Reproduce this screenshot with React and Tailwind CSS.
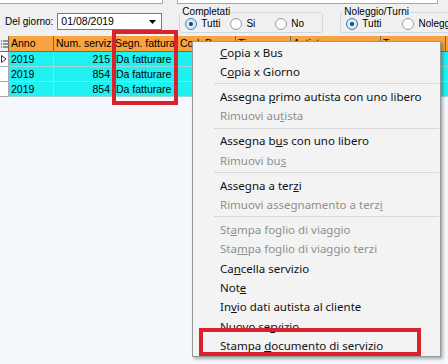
import React from "react";

const menuItems = [
  { label: "Copia x Bus", u: 0 },
  { label: "Copia x Giorno", u: 1 },
  { sep: true },
  { label: "Assegna primo autista con uno libero", u: 8 },
  { label: "Rimuovi autista", u: 10, disabled: true },
  { sep: true },
  { label: "Assegna bus con uno libero", u: 9 },
  { label: "Rimuovi bus", u: 10, disabled: true },
  { sep: true },
  { label: "Assegna a terzi", u: 13 },
  { label: "Rimuovi assegnamento a terzi", u: 27, disabled: true },
  { sep: true },
  { label: "Stampa foglio di viaggio", u: 2, disabled: true },
  { label: "Stampa foglio di viaggio terzi", u: 3, disabled: true },
  { label: "Cancella servizio", u: 2 },
  { label: "Note", u: 3 },
  { label: "Invio dati autista al cliente", u: 2 },
  { label: "Nuovo servizio", u: 8 },
  { label: "Stampa documento di servizio", u: 7 },
];

const rows = [
  { anno: "2019", num: "215", segn: "Da fatturare", current: true },
  { anno: "2019", num: "854", segn: "Da fatturare" },
  { anno: "2019", num: "854", segn: "Da fatturare" },
];

function Radio({ checked, label }) {
  return (
    <div className="flex shrink-0 items-center">
      <span
        className={`flex h-[12px] w-[12px] items-center justify-center rounded-full border ${
          checked ? "border-[#4a7fb0] bg-[#d4e8f7]" : "border-[#9a9a9a] bg-white"
        }`}
      >
        {checked && <span className="h-[4px] w-[4px] rounded-full bg-[#1b3f66]" />}
      </span>
      <span className="ml-[4px] whitespace-nowrap text-[10px] leading-none text-black">{label}</span>
    </div>
  );
}

function MenuLabel({ label, u }) {
  return (
    <>
      {label.slice(0, u)}
      <span className="underline underline-offset-[1px]">{label[u]}</span>
      {label.slice(u + 1)}
    </>
  );
}

export default function App() {
  return (
    <div className="relative h-[364px] w-[448px] overflow-hidden bg-[#f0f0f0] font-['Liberation_Sans',Arial,sans-serif] text-black">
      {/* Bottom edge of the fields above */}
      <div className="flex h-[5px]">
        <div className="h-[4px] w-[163px] border-b border-r border-[#a7a7a7] bg-white" />
        <div className="ml-[14px] h-[4px] w-[261px] border-b border-l border-r border-[#a7a7a7] bg-white" />
      </div>

      {/* Filters */}
      <div className="flex h-[31px] items-start">
        <span className="ml-[5px] mt-[12px] shrink-0 whitespace-nowrap text-[10px] leading-none">Del giorno:</span>
        <div className="ml-[4px] mt-[8px] flex h-[17px] w-[105px] shrink-0 items-center border border-[#7a7a7a] bg-white pl-[3px]">
          <span className="text-[10.5px] leading-none">01/08/2019</span>
          <svg className="ml-auto mr-[5px]" width="7" height="4" viewBox="0 0 7 4">
            <path d="M0 0h7L3.5 4z" fill="#000" />
          </svg>
        </div>

        <fieldset className="ml-[17px] mt-[2px] h-[26px] w-[144px] shrink-0 rounded-[3px] border border-[#d0d7dd] px-[5px]">
          <legend className="-ml-[4px] px-[1px] text-[10px] leading-[10px]">Completati</legend>
          <div className="mt-[1px] flex items-center">
            <Radio checked label="Tutti" />
            <div className="ml-[10px]"><Radio label="Si" /></div>
            <div className="ml-[20px]"><Radio label="No" /></div>
          </div>
        </fieldset>

        <fieldset className="ml-[17px] mt-[2px] h-[26px] w-[130px] shrink-0 rounded-[3px] border border-[#d0d7dd] px-[5px]">
          <legend className="-ml-[3px] px-[1px] text-[10px] leading-[10px]">Noleggio/Turni</legend>
          <div className="mt-[1px] flex items-center">
            <Radio checked label="Tutti" />
            <div className="ml-[21px]"><Radio label="Noleggio" /></div>
          </div>
        </fieldset>
      </div>

      {/* Grid */}
      <div className="h-[328px] bg-[#f4f8fc] text-[10.5px] leading-none">
        <div className="flex h-[16px] bg-[#f8a33f]">
          <div className="flex w-[9px] shrink-0 items-center justify-center border-b border-r border-[#6b6b6b] bg-[#f0f0f0]">
            <svg width="7" height="8" viewBox="0 0 7 8">
              <path d="M0 1h1M0 4h1M0 7h1" stroke="#333" strokeWidth="1" />
              <path d="M2 1h5M2 4h5M2 7h5" stroke="#333" strokeWidth="1" />
            </svg>
          </div>
          {[
            ["Anno", "w-[45px]"],
            ["Num. servizio", "w-[59px]"],
            ["Segn. fattura", "w-[65px]"],
            ["Cod. Bus", "w-[58px]"],
            ["Tipo", "w-[55px]"],
            ["Autista", "w-[90px]"],
            ["Targa", "w-[65px]"],
          ].map(([t, w]) => (
            <div
              key={t}
              className={`${w} flex shrink-0 items-center overflow-hidden whitespace-nowrap border-b border-r border-[#6b6b6b] pl-[2px]`}
            >
              {t}
            </div>
          ))}
          <div className="flex-1 border-b border-[#6b6b6b]" />
        </div>

        {rows.map((r, i) => (
          <div key={i} className="flex h-[15px] bg-[#1ff1f1]">
            <div className="flex w-[9px] shrink-0 items-center justify-center border-b border-r border-[#a9a9a9] bg-white">
              {r.current && (
                <svg width="6" height="8" viewBox="0 0 6 8">
                  <path d="M0.5 0.5L5 4L0.5 7.5z" fill="none" stroke="#333" strokeWidth="1" />
                </svg>
              )}
            </div>
            <div className="flex w-[45px] shrink-0 items-center border-b border-r border-[#9fd6d6] pl-[2px]">{r.anno}</div>
            <div className="flex w-[59px] shrink-0 items-center justify-end border-b border-r border-[#9fd6d6] pr-[2px]">{r.num}</div>
            <div className="flex w-[65px] shrink-0 items-center border-b border-r border-[#9fd6d6] pl-[3px]">{r.segn}</div>
            <div className="flex-1 border-b border-[#9fd6d6]" />
          </div>
        ))}
      </div>

      {/* Red highlight on column */}
      <div className="absolute left-[112px] top-[30px] h-[75px] w-[66px] border-4 border-[#d8232d]" />

      {/* Context menu */}
      <div className="absolute left-[192px] top-[41px] w-[249px] border border-[#979797] bg-[#f3f3f3] py-[1px] font-['Noto_Sans',sans-serif] text-[11.5px] leading-none shadow-[2px_2px_3px_rgba(0,0,0,0.3)]">
        {menuItems.map((m, i) =>
          m.sep ? (
            <div key={i} className="flex h-[5.7px] items-center pl-[21px] pr-[1px]">
              <div className="h-[2px] w-full border-t border-[#d7d7d7] border-b-white" />
            </div>
          ) : (
            <div
              key={i}
              className={`flex h-[19.3px] items-center pl-[27px] ${m.disabled ? "text-[#8f8f8f]" : "text-[#111]"}`}
            >
              <span className="whitespace-nowrap">
                <MenuLabel label={m.label} u={m.u} />
              </span>
            </div>
          )
        )}
      </div>

      {/* Red highlight on menu item */}
      <div className="absolute left-[199px] top-[328px] h-[28px] w-[222px] border-4 border-[#d8232d]" />
    </div>
  );
}
